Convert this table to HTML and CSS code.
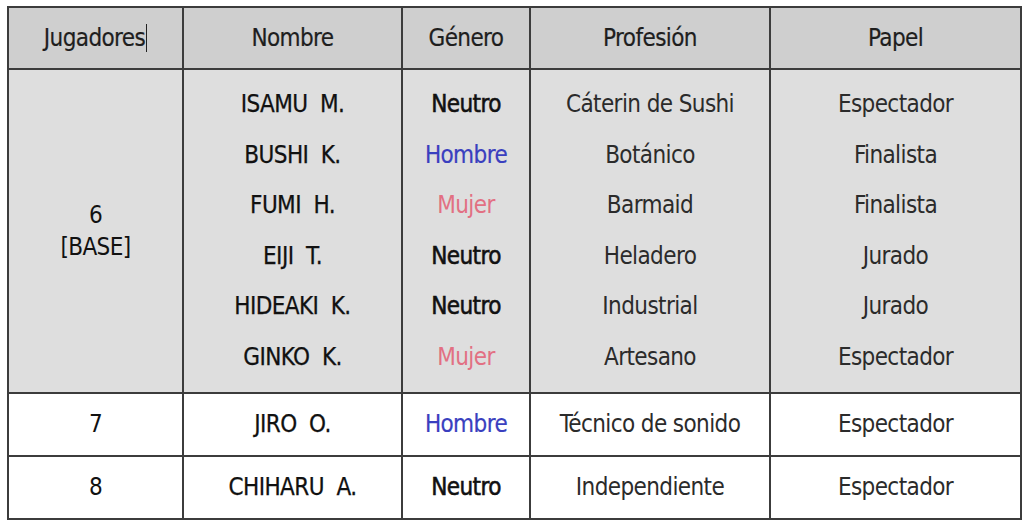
FILE: index.html
```html
<!DOCTYPE html>
<html lang="es">
<head>
<meta charset="utf-8">
<title>Jugadores</title>
<link rel="stylesheet" href="styles.css">
</head>
<body>
<table class="roster">
  <colgroup>
    <col class="c-jug">
    <col class="c-nom">
    <col class="c-gen">
    <col class="c-pro">
    <col class="c-pap">
  </colgroup>
  <thead>
    <tr class="head">
      <th><span class="caret">Jugadores</span></th>
      <th>Nombre</th>
      <th>Género</th>
      <th>Profesión</th>
      <th>Papel</th>
    </tr>
  </thead>
  <tbody>
    <tr class="group">
      <td class="num"><div class="base">6<br>[BASE]</div></td>
      <td class="name">
        <div class="line">ISAMU&nbsp; M.</div>
        <div class="line">BUSHI&nbsp; K.</div>
        <div class="line">FUMI&nbsp; H.</div>
        <div class="line">EIJI&nbsp; T.</div>
        <div class="line">HIDEAKI&nbsp; K.</div>
        <div class="line">GINKO&nbsp; K.</div>
      </td>
      <td>
        <div class="line neutro">Neutro</div>
        <div class="line hombre">Hombre</div>
        <div class="line mujer">Mujer</div>
        <div class="line neutro">Neutro</div>
        <div class="line neutro">Neutro</div>
        <div class="line mujer">Mujer</div>
      </td>
      <td class="plain">
        <div class="line">Cáterin de Sushi</div>
        <div class="line">Botánico</div>
        <div class="line">Barmaid</div>
        <div class="line">Heladero</div>
        <div class="line">Industrial</div>
        <div class="line">Artesano</div>
      </td>
      <td class="plain">
        <div class="line">Espectador</div>
        <div class="line">Finalista</div>
        <div class="line">Finalista</div>
        <div class="line">Jurado</div>
        <div class="line">Jurado</div>
        <div class="line">Espectador</div>
      </td>
    </tr>
    <tr class="single">
      <td class="num">7</td>
      <td class="name">JIRO&nbsp; O.</td>
      <td class="hombre">Hombre</td>
      <td class="plain">Técnico de sonido</td>
      <td class="plain">Espectador</td>
    </tr>
    <tr class="single">
      <td class="num">8</td>
      <td class="name">CHIHARU&nbsp; A.</td>
      <td class="neutro">Neutro</td>
      <td class="plain">Independiente</td>
      <td class="plain">Espectador</td>
    </tr>
  </tbody>
</table>
</body>
</html>
```

FILE: styles.css
```css
html, body {
  background: #ffffff;
}
body {
  margin: 6px 0 0 7px;
  font-family: "DejaVu Sans Condensed", "DejaVu Sans", sans-serif;
  font-size: 24px;
  letter-spacing: -0.6px;
  color: #222;
}
.roster {
  border-collapse: collapse;
  table-layout: fixed;
  width: 1013px;
}
.c-jug { width: 175px; }
.c-nom { width: 219px; }
.c-gen { width: 128px; }
.c-pro { width: 240px; }
.c-pap { width: 251px; }

.roster th,
.roster td {
  border: 2px solid #3c3c3c;
  text-align: center;
  vertical-align: middle;
  padding: 0;
}
.roster th {
  font-weight: normal;
  height: 60px;
  background: #cfcfcf;
  color: #1e1e1e;
  -webkit-text-stroke: 0.2px #1e1e1e;
}
.caret {
  border-right: 1px solid #222;
  padding-right: 1px;
}
.group td {
  background: #dedede;
  padding: 9px 0 9px;
}
.group td.num { padding: 0; }
.line {
  height: 50.6px;
  line-height: 50.6px;
}
.base {
  line-height: 32px;
}
.single td {
  height: 61px;
}
.name {
  color: #111;
  -webkit-text-stroke: 0.25px #111;
}
.num { color: #111; }
.plain { color: #2b2b2b; }
.neutro {
  color: #111;
  -webkit-text-stroke: 0.55px #111;
}
.hombre { color: #3a3fbf; -webkit-text-stroke: 0.2px #3a3fbf; }
.mujer { color: #e27083; }
```
